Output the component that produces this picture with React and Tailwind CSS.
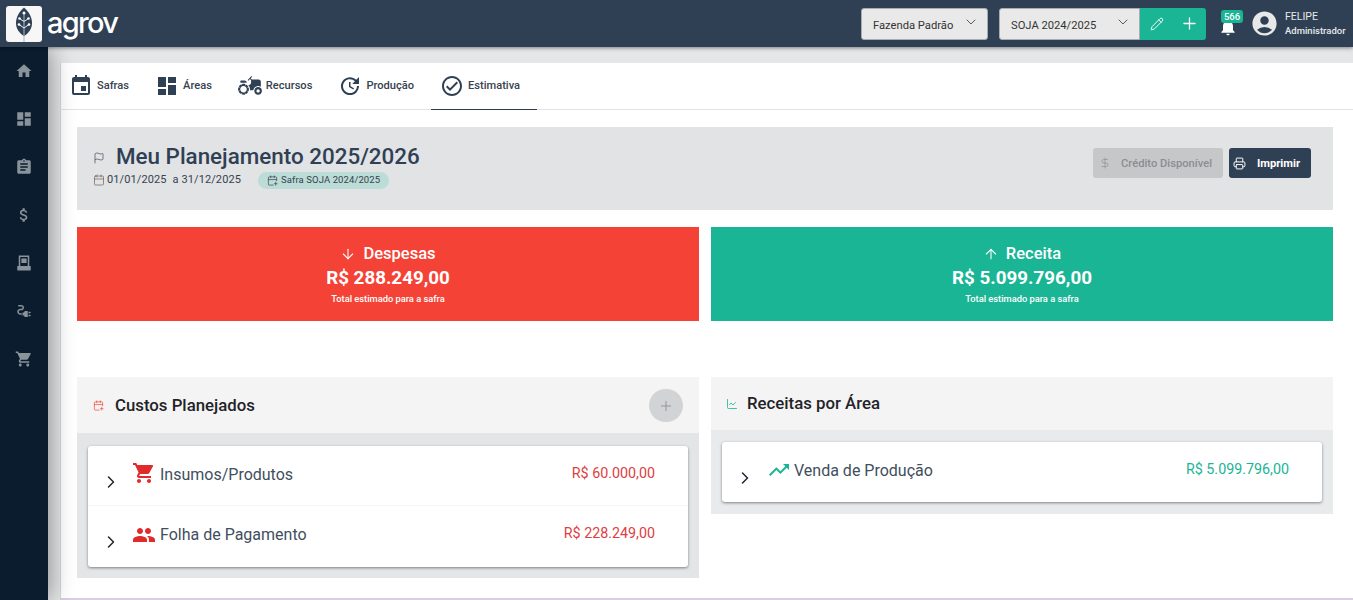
import React from "react";
import { MdHome, MdDashboard, MdAssignment, MdAttachMoney, MdElectricalServices, MdShoppingCart, MdEvent, MdAgriculture, MdUpdate, MdOutlineCheckCircle, MdNotifications, MdAccountCircle, MdPeople, MdTrendingUp } from "react-icons/md";
import { Pencil, Plus, ChevronDown, ChevronRight, Flag, Calendar, CalendarPlus, DollarSign, Printer, ArrowDown, ArrowUp, ChartLine } from "lucide-react";

function Logo() {
  return (
    <div className="flex items-center">
      <div className="w-[36px] h-[36px] rounded-[3px] bg-[#f7f7f7] overflow-hidden">
        <svg width="36" height="36" viewBox="0 0 36 36">
          <path d="M18 1.5C23 6 26 11 26 17C26 23 22.5 27.5 18 30C13.5 27.5 10 23 10 17C10 11 13 6 18 1.5Z" fill="#2f4054" />
          <path d="M18 6V36" stroke="#aeb4ba" strokeWidth="1" fill="none" />
          <path d="M18 15.5L13.5 12.5M18 15.5L22.5 12.5M18 22L13 18.5M18 22L23 18.5" stroke="#fff" strokeWidth="0.9" fill="none" />
          <circle cx="18" cy="7" r="1.5" fill="#fff" />
          <circle cx="13.5" cy="12.5" r="1.3" fill="#fff" />
          <circle cx="22.5" cy="12.5" r="1.3" fill="#fff" />
          <circle cx="13" cy="18.5" r="1.3" fill="#fff" />
          <circle cx="23" cy="18.5" r="1.3" fill="#fff" />
        </svg>
      </div>
      <span className="ml-[5px] -mt-[3px] text-white text-[29px] leading-none font-medium font-['Inter',sans-serif] tracking-[-1.7px]">agrov</span>
    </div>
  );
}

function CashIcon({ size, className }) {
  return (
    <svg width={size} height={size} viewBox="0 0 24 24" className={className} fill="currentColor">
      <path d="M5 2h14v16h-2V4H7v14H5z" />
      <path d="M8.5 6h7v6h-7z" />
      <path d="M3 16h18v6H3z" />
    </svg>
  );
}

function Select({ label, className }) {
  return (
    <div className={`h-[32px] bg-[#e9e9e9] border border-[#a9adb2] flex items-center justify-between pl-[11px] pr-[8px] text-[#333] text-[11.2px] ${className}`}>
      <span className="mt-[6px]">{label}</span>
      <ChevronDown size={16} strokeWidth={1.3} className="text-[#444] -mt-[3px]" />
    </div>
  );
}

function Header() {
  return (
    <header className="relative z-20 h-[47px] shrink-0 bg-[#2f4054] shadow-[0_1px_4px_rgba(0,0,0,0.45)] flex items-center pl-[6px]">
      <Logo />
      <div className="ml-auto flex items-center">
        <Select label="Fazenda Padrão" className="w-[127px] rounded-[3px]" />
        <Select label="SOJA 2024/2025" className="w-[141px] ml-[11px] rounded-l-[3px]" />
        <div className="w-[66px] h-[32px] bg-[#1ab595] rounded-r-[3px] flex items-center pl-[10px] text-white">
          <Pencil size={14} strokeWidth={1.6} />
          <Plus size={19} strokeWidth={1.6} className="ml-[16px]" />
        </div>
        <div className="relative ml-[14px] w-[22px] h-[32px] flex items-end">
          <MdNotifications size={20} className="text-white -ml-[2px] mb-[3px]" />
          <span className="absolute left-[1px] top-[2px] w-[22px] h-[13px] rounded-[3px] bg-[#1ab595] text-white text-[9.5px] leading-[13px] text-center font-medium">566</span>
        </div>
        <MdAccountCircle size={29} className="text-[#e8e8e8] ml-[8px]" />
        <div className="ml-[6px] w-[68px] text-[#e6e8ea] leading-none">
          <div className="text-[10.5px] mb-[3px]">FELIPE</div>
          <div className="text-[9.5px] font-medium whitespace-nowrap">Administrador</div>
        </div>
      </div>
    </header>
  );
}

function Sidebar() {
  const items = [MdHome, MdDashboard, MdAssignment, MdAttachMoney, CashIcon, MdElectricalServices, MdShoppingCart];
  return (
    <aside className="relative z-10 w-[48px] shrink-0 bg-[#0a1c2e] shadow-[0_0_26px_rgba(0,0,0,0.45)] flex flex-col items-center">
      {items.map((I, i) => (
        <div key={i} className="h-[48px] flex items-center justify-center">
          <I size={18} className="text-[#8a929a]" />
        </div>
      ))}
    </aside>
  );
}

function Tab({ icon, label, active }) {
  return (
    <div className={`h-[47px] pl-[9px] pr-[17px] flex items-center border-b ${active ? "border-[#2f3b48]" : "border-transparent"}`}>
      <span className="w-[24px] flex justify-center text-[#2f4054]">{icon}</span>
      <span className="ml-[4px] text-[11.1px] font-medium text-[#36424f]">{label}</span>
    </div>
  );
}

function Kpi({ color, icon, title, value }) {
  return (
    <div className={`flex-1 h-[94px] ${color} text-white flex flex-col items-center pt-[16px]`}>
      <div className="flex items-center h-[22px] text-[16.5px] font-medium leading-none">
        {icon}
        <span className="ml-[7px]">{title}</span>
      </div>
      <div className="text-[18.8px] font-bold leading-[24px] mt-[1px]">{value}</div>
      <div className="text-[9.3px] font-medium leading-none mt-[4px]">Total estimado para a safra</div>
    </div>
  );
}

function Row({ icon, label, value, color, second }) {
  return (
    <div className={`relative flex items-start ${second ? "h-[61px] shadow-[0_-1px_0_#f6f6f6]" : "h-[60px]"}`}>
      <ChevronRight size={20} strokeWidth={1.8} className="absolute left-[13px] top-[26px] text-[#1c2530]" />
      <div className="ml-[44px] mt-[16px] w-[28px] flex justify-start">{icon}</div>
      <span className="mt-[19px] text-[16px] leading-[20px] text-[#414e5e]">{label}</span>
      <span className={`ml-auto mr-[33px] mt-[17px] text-[14.3px] leading-[20px] ${color}`}>{value}</span>
    </div>
  );
}

export default function App() {
  return (
    <div className="w-[1353px] h-[600px] overflow-hidden flex flex-col font-['Roboto',sans-serif] bg-[#e5e6e8]">
      <Header />
      <div className="flex flex-1 min-h-0">
        <Sidebar />
        <main className="flex-1 pt-[16px] pl-[12px] min-w-0">
          <div className="h-[537px] bg-white border-l border-[#d5d6d8] border-b-[2px] border-b-[#d9cfe0]">
            <nav className="h-[47px] flex border-b border-[#e2e3e5] -ml-[1px]">
              <Tab icon={<MdEvent size={24} />} label="Safras" />
              <Tab icon={<MdDashboard size={24} />} label="Áreas" />
              <Tab icon={<MdAgriculture size={26} className="shrink-0" />} label="Recursos" />
              <Tab icon={<MdUpdate size={24} />} label="Produção" />
              <Tab icon={<MdOutlineCheckCircle size={24} />} label="Estimativa" active />
            </nav>
            <div className="pl-[16px] pr-[20px] pt-[17px]">
              <section className="h-[83px] bg-[#e2e3e5] flex justify-between pl-[16px] pr-[22px]">
                <div>
                  <div className="flex items-center mt-[15px] h-[28px]">
                    <Flag size={12} strokeWidth={1.4} className="text-[#3c4a58] mt-[3px]" />
                    <h1 className="ml-[11px] text-[22.4px] font-medium leading-none text-[#2f4054]">Meu Planejamento 2025/2026</h1>
                  </div>
                  <div className="flex items-center mt-[1px] text-[11px] text-[#36424f] h-[18px]">
                    <Calendar size={12} strokeWidth={1.3} className="text-[#6b5550]" />
                    <span className="ml-[2px] tracking-[0.1px]">01/01/2025</span>
                    <span className="ml-[6px] tracking-[0.1px]">a 31/12/2025</span>
                    <span className="ml-[17px] h-[17px] px-[9px] rounded-full bg-[#bcdcd7] flex items-center text-[9.5px] tracking-[0.1px]">
                      <CalendarPlus size={11} strokeWidth={1.5} className="mr-[3px]" />
                      Safra SOJA 2024/2025
                    </span>
                  </div>
                </div>
                <div className="flex items-start mt-[21px] gap-[6px]">
                  <div className="w-[130px] h-[30px] rounded-[3px] bg-[#c6c7c9] text-[#8b8d90] flex items-center pl-[6px] text-[11.2px] font-medium">
                    <DollarSign size={12} strokeWidth={1.3} />
                    <span className="ml-[10px] mt-[2px]">Crédito Disponível</span>
                  </div>
                  <div className="w-[82px] h-[30px] rounded-[3px] bg-[#2f4054] text-white flex items-center pl-[4px] text-[11.2px] font-bold">
                    <Printer size={13} strokeWidth={1.8} />
                    <span className="ml-[11px] mt-[2px]">Imprimir</span>
                  </div>
                </div>
              </section>

              <div className="flex gap-[12px] mt-[17px]">
                <Kpi color="bg-[#f44336]" icon={<ArrowDown size={16} strokeWidth={1.6} />} title="Despesas" value="R$ 288.249,00" />
                <Kpi color="bg-[#1ab595]" icon={<ArrowUp size={16} strokeWidth={1.6} />} title="Receita" value="R$ 5.099.796,00" />
              </div>

              <div className="flex gap-[12px] mt-[56px] items-start">
                <section className="flex-1">
                  <div className="h-[56px] bg-[#f4f4f4] flex items-center pl-[16px] pr-[16px] pt-[1px]">
                    <CalendarPlus size={11} strokeWidth={1.5} className="text-[#f44336]" />
                    <h2 className="ml-[11px] text-[16.8px] font-medium text-[#1f2328]">Custos Planejados</h2>
                    <div className="ml-auto w-[34px] h-[33px] rounded-full bg-[#d2d3d5] flex items-center justify-center text-[#8a8f95]">
                      <Plus size={16} strokeWidth={1.3} />
                    </div>
                  </div>
                  <div className="h-[145px] bg-[#e4e5e7] px-[11px] pt-[13px]">
                    <div className="bg-white rounded-[3px] shadow-[0_1px_3px_rgba(0,0,0,0.45)]">
                      <Row icon={<MdShoppingCart size={24} className="text-[#e12a2a] -mt-[1px]" />} label="Insumos/Produtos" value="R$ 60.000,00" color="text-[#e0403f]" />
                      <Row icon={<MdPeople size={24} className="text-[#e12a2a] mt-[1px]" />} label="Folha de Pagamento" value="R$ 228.249,00" color="text-[#e0403f]" second />
                    </div>
                  </div>
                </section>
                <section className="flex-1">
                  <div className="h-[53px] bg-[#f4f4f4] flex items-center pl-[15px]">
                    <ChartLine size={12} strokeWidth={1.6} className="text-[#1ab595]" />
                    <h2 className="ml-[9px] text-[16.8px] font-medium text-[#1f2328]">Receitas por Área</h2>
                  </div>
                  <div className="h-[84px] bg-[#e9eaeb] px-[11px] pt-[12px]">
                    <div className="bg-white rounded-[3px] shadow-[0_1px_3px_rgba(0,0,0,0.45)]">
                      <Row icon={<MdTrendingUp size={24} className="text-[#1ab595] ml-[1px]" />} label="Venda de Produção" value="R$ 5.099.796,00" color="text-[#1ab595]" />
                    </div>
                  </div>
                </section>
              </div>
            </div>
          </div>
        </main>
      </div>
    </div>
  );
}
